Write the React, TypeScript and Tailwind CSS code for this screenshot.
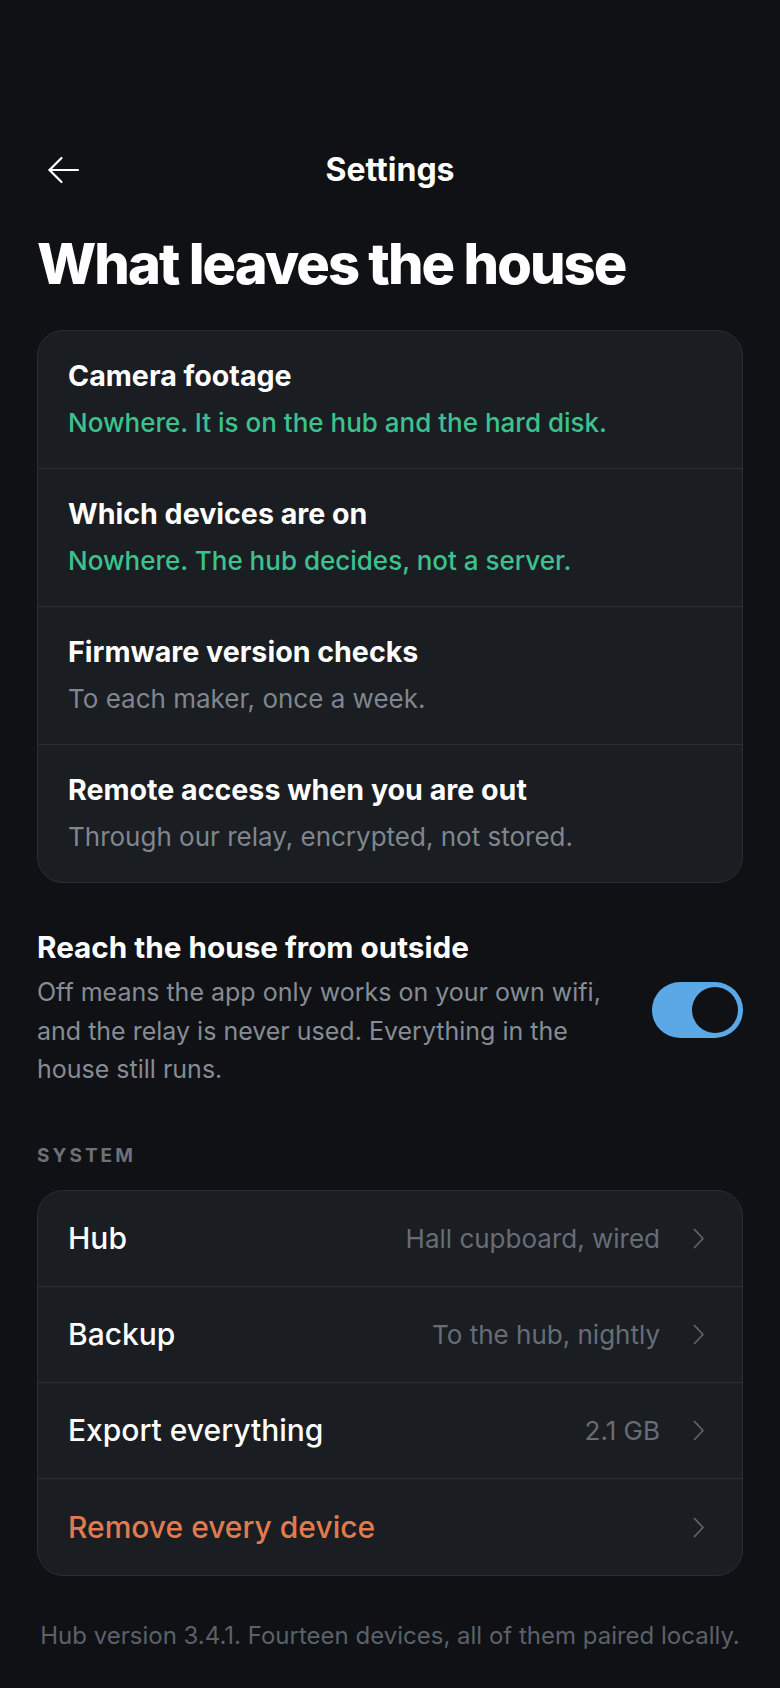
import React from "react";

const Chevron = () => (
  <svg width="12" height="21" viewBox="0 0 12 21" fill="none" className="shrink-0">
    <path d="M1.5 1.5 L10 10.5 L1.5 19.5" stroke="#5d636c" strokeWidth="1.8" strokeLinecap="round" strokeLinejoin="round" />
  </svg>
);

const BackArrow = () => (
  <svg width="33" height="28" viewBox="0 0 33 28" fill="none">
    <path d="M31 14 H2.5" stroke="#ffffff" strokeWidth="2.2" strokeLinecap="round" />
    <path d="M14.5 2 L2.5 14 L14.5 26" stroke="#ffffff" strokeWidth="2.2" strokeLinecap="round" strokeLinejoin="round" />
  </svg>
);

const leaves = [
  { t: "Camera footage", s: "Nowhere. It is on the hub and the hard disk.", green: true },
  { t: "Which devices are on", s: "Nowhere. The hub decides, not a server.", green: true },
  { t: "Firmware version checks", s: "To each maker, once a week.", green: false },
  { t: "Remote access when you are out", s: "Through our relay, encrypted, not stored.", green: false },
];

const system = [
  { t: "Hub", v: "Hall cupboard, wired" },
  { t: "Backup", v: "To the hub, nightly" },
  { t: "Export everything", v: "2.1 GB" },
  { t: "Remove every device", v: "", danger: true },
];

export default function App() {
  return (
    <div className="min-h-screen bg-[#0f1114] text-white font-['Inter',sans-serif] px-[37px] pb-[40px]">
      <div className="pt-[144px] h-[196px] grid grid-cols-[1fr_auto_1fr] items-center">
        <div className="flex items-center pl-[10px]">
          <BackArrow />
        </div>
        <div className="text-[32px] leading-[52px] font-bold">Settings</div>
        <div />
      </div>

      <h1 className="mt-[36px] text-[56px] leading-[64px] font-extrabold tracking-[-0.035em]">
        What leaves the house
      </h1>

      <div className="mt-[34px] rounded-[26px] border border-[#2a2e34] bg-[#1a1d21] overflow-hidden">
        {leaves.map((r, i) => (
          <div
            key={r.t}
            className={`px-[30px] pt-[28px] pb-[29px] flex flex-col gap-[14px] ${i < leaves.length - 1 ? "border-b border-[#2a2e34]" : ""}`}
          >
            <div className="text-[28.6px] leading-[34px] font-bold text-white">{r.t}</div>
            <div className={`text-[26px] leading-[32px] ${r.green ? "text-[#3cc28e] font-medium" : "text-[#80868f]"}`}>{r.s}</div>
          </div>
        ))}
      </div>

      <div className="mt-[47px] flex items-center gap-[32px]">
        <div className="flex-1 flex flex-col gap-[9px]">
          <div className="text-[29.7px] leading-[34px] font-bold">Reach the house from outside</div>
          <div className="text-[25px] leading-[38.7px] text-[#868c95]">
            Off means the app only works on your own wifi, and the relay is never used. Everything in the house still runs.
          </div>
        </div>
        <div className="w-[91px] h-[56px] rounded-full bg-[#5aa8e6] flex items-center justify-end p-[5px] shrink-0">
          <div className="w-[46px] h-[46px] rounded-full bg-[#0f1114]" />
        </div>
      </div>

      <div className="mt-[55px] text-[19px] leading-[24px] font-bold tracking-[0.16em] text-[#6b717a]">SYSTEM</div>

      <div className="mt-[22px] rounded-[26px] border border-[#2a2e34] bg-[#1a1d21] overflow-hidden">
        {system.map((r, i) => (
          <div
            key={r.t}
            className={`h-[96px] pl-[30px] pr-[37px] flex items-center ${i < system.length - 1 ? "border-b border-[#2a2e34]" : ""}`}
          >
            <div className={`flex-1 text-[30px] font-medium ${r.danger ? "text-[#e07b4f]" : "text-white"}`}>{r.t}</div>
            {r.v && <div className="text-[26px] text-[#676d76] mr-[33px]">{r.v}</div>}
            <Chevron />
          </div>
        ))}
      </div>

      <div className="mt-[44px] text-center text-[24px] leading-[32px] text-[#5b616a]">
        Hub version 3.4.1. Fourteen devices, all of them paired locally.
      </div>
    </div>
  );
}
